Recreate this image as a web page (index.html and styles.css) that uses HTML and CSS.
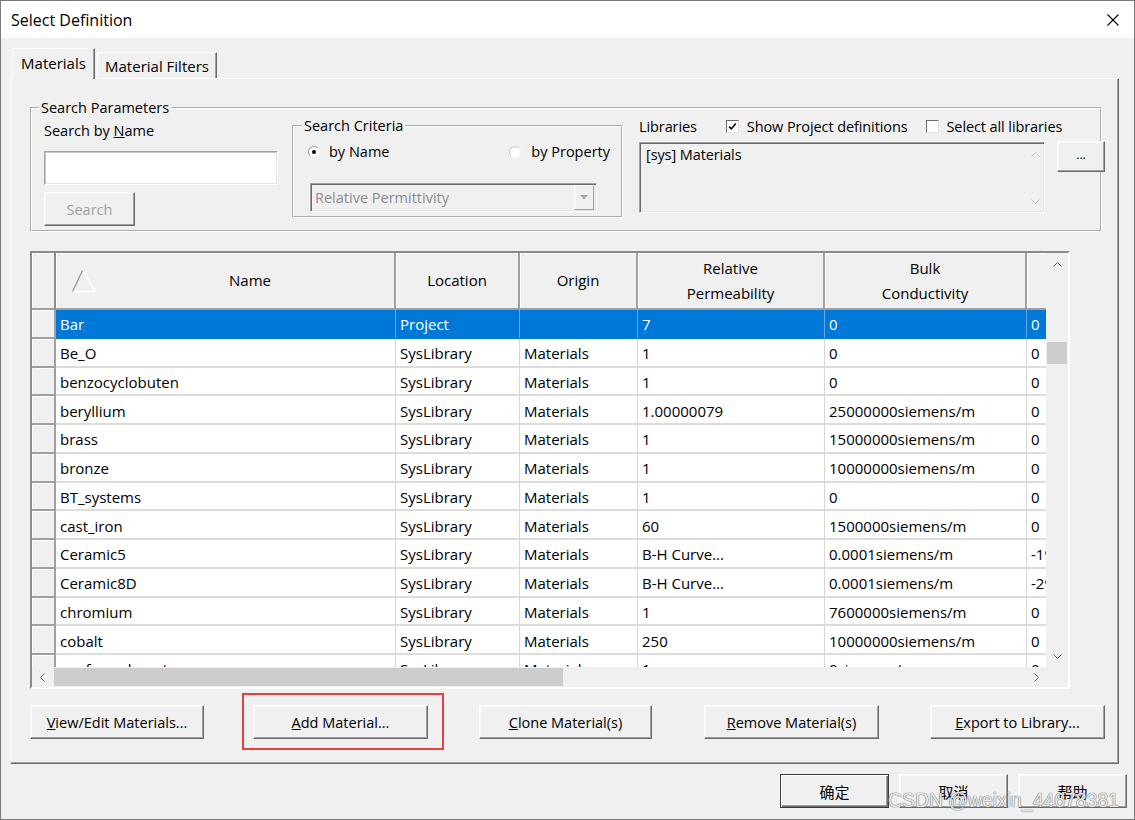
FILE: index.html
```html
<!DOCTYPE html>
<html>
<head>
<meta charset="utf-8">
<title>Select Definition</title>
<link rel="stylesheet" href="styles.css">
</head>
<body>
<div class="window">
  <div class="titlebar">
    <span class="title">Select Definition</span>
    <svg class="close" width="12" height="12" viewBox="0 0 12 12"><path d="M0.5 0.5L11.5 11.5M11.5 0.5L0.5 11.5" stroke="#000" stroke-width="1.1"/></svg>
  </div>
  <div class="client">
    <div class="tabs">
      <div class="tab active">Materials</div>
      <div class="tab">Material Filters</div>
    </div>
    <div class="panel">
      <fieldset class="group params">
        <legend>Search Parameters</legend>
        <div class="params-row">
          <div class="byname">
            <div class="lbl">Search by <u>N</u>ame</div>
            <div class="textbox"></div>
            <div class="btn disabled search-btn">Search</div>
          </div>
          <fieldset class="group criteria">
            <legend>Search Criteria</legend>
            <div class="radios">
              <span class="radio"><span class="dot on"></span>by Name</span>
              <span class="radio"><span class="dot"></span>by Property</span>
            </div>
            <div class="combo">
              <span class="combo-text">Relative Permittivity</span>
              <span class="combo-btn"><svg width="8" height="5" viewBox="0 0 8 5"><path d="M0 0H8L4 4.5Z" fill="#a8a8a8"/></svg></span>
            </div>
          </fieldset>
          <div class="libraries">
            <div class="lib-head">
              <span class="lib-label">Libraries</span>
              <span class="check on"><svg width="9" height="9" viewBox="0 0 9 9"><path d="M1.2 4.6L3.4 6.9L7.8 1.6" fill="none" stroke="#000" stroke-width="1.6"/></svg></span>
              <span class="check-text">Show Project definitions</span>
              <span class="check second"></span>
              <span class="check-text">Select all libraries</span>
            </div>
            <div class="lib-body">
              <div class="listbox">
                <span class="list-item">[sys] Materials</span>
                <span class="list-arrows">
                  <svg width="9" height="5" viewBox="0 0 9 5"><path d="M0.5 4.5L4.5 0.5L8.5 4.5" fill="none" stroke="#c4c4c4"/></svg>
                  <svg width="9" height="5" viewBox="0 0 9 5"><path d="M0.5 0.5L4.5 4.5L8.5 0.5" fill="none" stroke="#c4c4c4"/></svg>
                </span>
              </div>
              <div class="btn dots">...</div>
            </div>
          </div>
        </div>
      </fieldset>

      <div class="grid">
        <div class="grid-main">
          <div class="viewport">
            <table class="mtable">
              <colgroup>
                <col class="c-rh"><col class="c-name"><col class="c-loc"><col class="c-orig"><col class="c-perm"><col class="c-bulk"><col class="c-last">
              </colgroup>
              <thead>
                <tr>
                  <th class="rh"></th>
                  <th class="sort"><svg class="sort-icon" width="26" height="24" viewBox="0 0 26 24"><path d="M11.5 1.5L24.5 22.5H1.5" fill="none" stroke="#fff" stroke-width="1.6"/><path d="M1.5 22.5L11.5 1.5" stroke="#8c8c8c" stroke-width="1.1"/></svg>Name</th>
                  <th>Location</th>
                  <th>Origin</th>
                  <th class="two">Relative<br>Permeability</th>
                  <th class="two">Bulk<br>Conductivity</th>
                  <th></th>
                </tr>
              </thead>
              <tbody>
                <tr class="sel"><td class="rh"></td><td>Bar</td><td>Project</td><td></td><td>7</td><td>0</td><td>0</td></tr>
                <tr><td class="rh"></td><td>Be_O</td><td>SysLibrary</td><td>Materials</td><td>1</td><td>0</td><td>0</td></tr>
                <tr><td class="rh"></td><td>benzocyclobuten</td><td>SysLibrary</td><td>Materials</td><td>1</td><td>0</td><td>0</td></tr>
                <tr><td class="rh"></td><td>beryllium</td><td>SysLibrary</td><td>Materials</td><td>1.00000079</td><td>25000000siemens/m</td><td>0</td></tr>
                <tr><td class="rh"></td><td>brass</td><td>SysLibrary</td><td>Materials</td><td>1</td><td>15000000siemens/m</td><td>0</td></tr>
                <tr><td class="rh"></td><td>bronze</td><td>SysLibrary</td><td>Materials</td><td>1</td><td>10000000siemens/m</td><td>0</td></tr>
                <tr><td class="rh"></td><td>BT_systems</td><td>SysLibrary</td><td>Materials</td><td>1</td><td>0</td><td>0</td></tr>
                <tr><td class="rh"></td><td>cast_iron</td><td>SysLibrary</td><td>Materials</td><td>60</td><td>1500000siemens/m</td><td>0</td></tr>
                <tr><td class="rh"></td><td>Ceramic5</td><td>SysLibrary</td><td>Materials</td><td>B-H Curve...</td><td>0.0001siemens/m</td><td>-190000</td></tr>
                <tr><td class="rh"></td><td>Ceramic8D</td><td>SysLibrary</td><td>Materials</td><td>B-H Curve...</td><td>0.0001siemens/m</td><td>-295000</td></tr>
                <tr><td class="rh"></td><td>chromium</td><td>SysLibrary</td><td>Materials</td><td>1</td><td>7600000siemens/m</td><td>0</td></tr>
                <tr><td class="rh"></td><td>cobalt</td><td>SysLibrary</td><td>Materials</td><td>250</td><td>10000000siemens/m</td><td>0</td></tr>
                <tr><td class="rh"></td><td>conformal_coat</td><td>SysLibrary</td><td>Materials</td><td>1</td><td>0siemens/m</td><td>0</td></tr>
              </tbody>
            </table>
          </div>
          <div class="vscroll">
            <span class="arrow-v"><svg width="9" height="5" viewBox="0 0 9 5"><path d="M0.5 4.5L4.5 0.5L8.5 4.5" fill="none" stroke="#606060"/></svg></span>
            <span class="vtrack"><span class="vthumb"></span></span>
            <span class="arrow-v"><svg width="9" height="5" viewBox="0 0 9 5"><path d="M0.5 0.5L4.5 4.5L8.5 0.5" fill="none" stroke="#606060"/></svg></span>
          </div>
        </div>
        <div class="hscroll-row">
          <div class="hscroll">
            <span class="arrow-h"><svg width="5" height="9" viewBox="0 0 5 9"><path d="M4.5 0.5L0.5 4.5L4.5 8.5" fill="none" stroke="#606060"/></svg></span>
            <span class="htrack"><span class="hthumb"></span></span>
            <span class="arrow-h"><svg width="5" height="9" viewBox="0 0 5 9"><path d="M0.5 0.5L4.5 4.5L0.5 8.5" fill="none" stroke="#606060"/></svg></span>
          </div>
          <div class="corner"></div>
        </div>
      </div>

      <div class="actions">
        <div class="btn w174"><u>V</u>iew/Edit Materials...</div>
        <div class="hl-wrap g49">
          <div class="btn w175"><u>A</u>dd Material...</div>
          <div class="hl"></div>
        </div>
        <div class="btn w173 g51"><u>C</u>lone Material(s)</div>
        <div class="btn w175 g52"><u>R</u>emove Material(s)</div>
        <div class="btn w175 g51"><u>E</u>xport to Library...</div>
      </div>
    </div>

    <div class="dialog-buttons">
      <div class="btn cjk default">确定</div>
      <div class="btn cjk">取消</div>
      <div class="btn cjk">帮助</div>
    </div>
  </div>
  <div class="watermark">CSDN @weixin_44678381</div>
</div>
</body>
</html>
```

FILE: styles.css
```css
* { box-sizing: border-box; }

body {
  margin: 0;
  width: 1135px;
  height: 820px;
  overflow: hidden;
  background: #f0f0f0;
  font-family: "Open Sans", "Noto Sans", sans-serif;
  font-size: 14.5px;
  color: #000;
}

.window {
  position: relative;
  width: 1135px;
  height: 820px;
  border: 1px solid #7a7a7a;
  background: #f0f0f0;
}

.titlebar {
  height: 37px;
  background: #fff;
  display: flex;
  align-items: center;
  justify-content: space-between;
  padding: 0 15px 0 10px;
}
.title { font-size: 16px; }

.client { padding: 10px 0 0 9px; }

/* Tabs */
.tabs {
  display: flex;
  align-items: flex-end;
  height: 30px;
  margin-left: 2px;
}
.tab {
  background: #f0f0f0;
  border-left: 1px solid #fff;
  border-top: 1px solid #fff;
  border-right: 1px solid #696969;
  box-shadow: inset -1px 0 #a0a0a0;
  display: flex;
  align-items: center;
  justify-content: center;
  font-size: 15px;
}
.tab.active {
  width: 83px;
  height: 31px;
  margin-bottom: -1px;
  position: relative;
  z-index: 1;
  padding-bottom: 2px;
}
.tab:not(.active) {
  width: 120px;
  height: 26px;
  margin-left: 2px;
}

/* Panel */
.panel {
  width: 1109px;
  height: 686px;
  border-left: 1px solid #fff;
  border-top: 1px solid #fff;
  border-right: 1px solid #696969;
  border-bottom: 1px solid #696969;
  box-shadow: inset -1px -1px #a0a0a0;
  padding-left: 19px;
}

.group {
  margin: 0;
  border: 2px groove #fff;
  min-width: 0;
}
.group > legend {
  padding: 0 2px;
  line-height: 18px;
  font-size: 14.5px;
}

.params {
  margin-top: 20px;
  width: 1072px;
  padding: 0 0 4px 7px;
}
.params-row {
  display: flex;
  align-items: flex-start;
}

.byname {
  margin-left: 5px;
  width: 234px;
  flex-shrink: 0;
}
.lbl {
  margin-top: 4px;
  line-height: 20px;
}
.textbox {
  margin-top: 10px;
  width: 234px;
  height: 34px;
  background: #fff;
  border: 1px solid;
  border-color: #a0a0a0 #fff #fff #a0a0a0;
  box-shadow: inset 1px 1px #c8c8c8, inset -1px -1px #e3e3e3;
}

.btn {
  display: flex;
  align-items: center;
  justify-content: center;
  height: 34px;
  background: #f0f0f0;
  border: 1px solid;
  border-color: #fff #696969 #696969 #fff;
  box-shadow: inset -1px -1px #a0a0a0, inset 1px 1px #f8f8f8;
  font-size: 14.5px;
  white-space: nowrap;
  flex-shrink: 0;
}
.btn.disabled { color: #a0a0a0; }
.search-btn {
  margin-top: 7px;
  width: 91px;
}

/* Search Criteria */
.criteria {
  margin-left: 14px;
  width: 331px;
  flex-shrink: 0;
  padding: 0 0 4px 8px;
}
.radios {
  margin-top: 7px;
  margin-left: 6px;
  width: 302px;
  display: flex;
  justify-content: space-between;
  line-height: 20px;
}
.radio {
  display: flex;
  align-items: center;
}
.dot {
  width: 12px;
  height: 12px;
  border-radius: 50%;
  background: #fff;
  border: 1px solid;
  border-color: #a0a0a0 #f0f0f0 #f0f0f0 #a0a0a0;
  margin-right: 9px;
  display: inline-flex;
  align-items: center;
  justify-content: center;
}
.dot:not(.on) { margin-right: 10px; border-color: #c8c8c8 #f6f6f6 #f6f6f6 #c8c8c8; }
.dot.on::after {
  content: "";
  width: 4px;
  height: 4px;
  border-radius: 50%;
  background: #000;
}

.combo {
  margin-top: 21px;
  margin-left: 8px;
  width: 287px;
  height: 29px;
  display: flex;
  align-items: center;
  justify-content: space-between;
  border: 1px solid;
  border-color: #a0a0a0 #fff #fff #a0a0a0;
  box-shadow: inset 1px 1px #696969, inset -1px -1px #e3e3e3;
  padding: 0 2px 0 4px;
}
.combo-text { color: #8c8c8c; }
.combo-btn {
  width: 20px;
  height: 25px;
  display: flex;
  align-items: center;
  justify-content: center;
  border: 1px solid;
  border-color: #fff #a0a0a0 #a0a0a0 #fff;
}

/* Libraries */
.libraries {
  margin-left: 16px;
  width: 466px;
  flex-shrink: 0;
}
.lib-head {
  height: 18px;
  display: flex;
  align-items: center;
  font-size: 14.5px;
  letter-spacing: -0.1px;
}
.check {
  width: 13px;
  height: 13px;
  background: #fff;
  border: 1px solid;
  border-color: #696969 #e3e3e3 #e3e3e3 #696969;
  display: inline-flex;
  align-items: center;
  justify-content: center;
  margin-left: 29px;
  margin-right: 8px;
}
.check.second { margin-left: 18px; }
.lib-body {
  display: flex;
  align-items: flex-start;
}
.listbox {
  margin-top: 7px;
  width: 406px;
  height: 71px;
  border: 1px solid;
  border-color: #a0a0a0 #fff #fff #a0a0a0;
  box-shadow: inset 1px 1px #696969, inset -1px -1px #e3e3e3;
  display: flex;
  justify-content: space-between;
  padding: 2px 4px 8px 6px;
  font-size: 14.5px;
  letter-spacing: -0.1px;
}
.list-item { line-height: 20px; }
.list-arrows {
  display: flex;
  flex-direction: column;
  justify-content: space-between;
  padding: 7px 0 0;
}
.dots {
  margin-top: 6px;
  margin-left: 12px;
  width: 48px;
  height: 31px;
  font-size: 12px;
  padding-bottom: 4px;
}

/* Grid */
.grid {
  margin-top: 19px;
  width: 1040px;
  height: 438px;
  border: 2px solid;
  border-color: #8a8a8a #fff #fff #8a8a8a;
  background: #f0f0f0;
}
.grid-main {
  display: flex;
  height: 414px;
}
.viewport {
  width: 1014px;
  height: 414px;
  overflow: hidden;
  background: #fff;
}
.mtable {
  table-layout: fixed;
  border-collapse: separate;
  border-spacing: 0;
  width: 1095px;
  font-size: 15px;
}
.c-rh { width: 24px; }
.c-name { width: 340px; }
.c-loc { width: 124px; }
.c-orig { width: 118px; }
.c-perm { width: 187px; }
.c-bulk { width: 202px; }
.c-last { width: 100px; }

.mtable th {
  height: 57px;
  background: #f0f0f0;
  font-weight: normal;
  text-align: center;
  border-right: 2px solid #a0a0a0;
  border-bottom: 2px solid #a0a0a0;
  box-shadow: inset 1px 1px #fff;
  line-height: 25px;
  padding: 0;
  position: relative;
}
.mtable th.rh { border-right-color: #8a8a8a; }
.mtable th.sort { padding-left: 50px; }
.mtable th.two { padding-top: 0; }
.sort-icon {
  position: absolute;
  left: 15px;
  top: 50%;
  transform: translateY(-50%);
}
.mtable tbody tr { height: 28.75px; }
.mtable td {
  padding: 2px 4px 0;
  white-space: nowrap;
  overflow: hidden;
  border-right: 1px solid #d6d6d6;
  border-bottom: 2px solid #dcdcdc;
  background: #fff;
}
.mtable td.rh {
  background: #f0f0f0;
  border-right: 2px solid #a0a0a0;
  border-bottom: 2px solid #a0a0a0;
  box-shadow: inset 1px 1px #fff;
  padding: 0;
}
.mtable tr.sel td:not(.rh) {
  background: #0078d7;
  color: #fff;
  border-right-color: #65a9e4;
  border-bottom-color: #0078d7;
}

.vscroll {
  width: 22px;
  height: 414px;
  display: flex;
  flex-direction: column;
  background: #f0f0f0;
}
.arrow-v {
  height: 22px;
  display: flex;
  align-items: center;
  justify-content: center;
  padding-left: 1px;
}
.vtrack {
  flex: 1;
  padding: 67px 1px 0;
}
.vthumb {
  display: block;
  height: 22px;
  background: #cdcdcd;
}

.hscroll-row {
  display: flex;
  height: 20px;
}
.hscroll {
  width: 1014px;
  display: flex;
  background: #f0f0f0;
}
.arrow-h {
  width: 20px;
  display: flex;
  align-items: center;
  justify-content: center;
}
.htrack {
  flex: 1;
  padding: 1px 2px;
}
.hthumb {
  display: block;
  width: 509px;
  height: 18px;
  background: #cdcdcd;
}
.corner { width: 22px; background: #f0f0f0; }

/* Action buttons */
.actions {
  margin-top: 16px;
  width: 1075px;
  display: flex;
}
.w173 { width: 173px; }
.w174 { width: 174px; }
.w175 { width: 175px; }
.g49 { margin-left: 49px; }
.g51 { margin-left: 51px; }
.g52 { margin-left: 52px; }
.hl-wrap { position: relative; }
.hl {
  position: absolute;
  left: -11px;
  top: -12px;
  width: 202px;
  height: 57px;
  border: 2px solid #e8403f;
}

/* Dialog buttons */
.dialog-buttons {
  margin-top: 10px;
  padding-right: 7px;
  display: flex;
  justify-content: flex-end;
  gap: 10px;
}
.btn.cjk {
  width: 109px;
  font-family: "Noto Sans CJK SC", sans-serif;
  font-size: 15px;
}
.btn.default {
  border: 1px solid #3c3c3c;
  box-shadow: inset 1px 1px #fff, inset -1px -1px #696969, inset -2px -2px #a0a0a0;
}

.watermark {
  position: absolute;
  left: 887px;
  top: 788px;
  font-family: "Liberation Sans", Arial, sans-serif;
  font-size: 19.4px;
  color: rgba(255, 255, 255, 0.85);
  text-shadow: 0 0 1px #6a6a6a, 0 0 1px #6a6a6a;
  white-space: nowrap;
}
```
